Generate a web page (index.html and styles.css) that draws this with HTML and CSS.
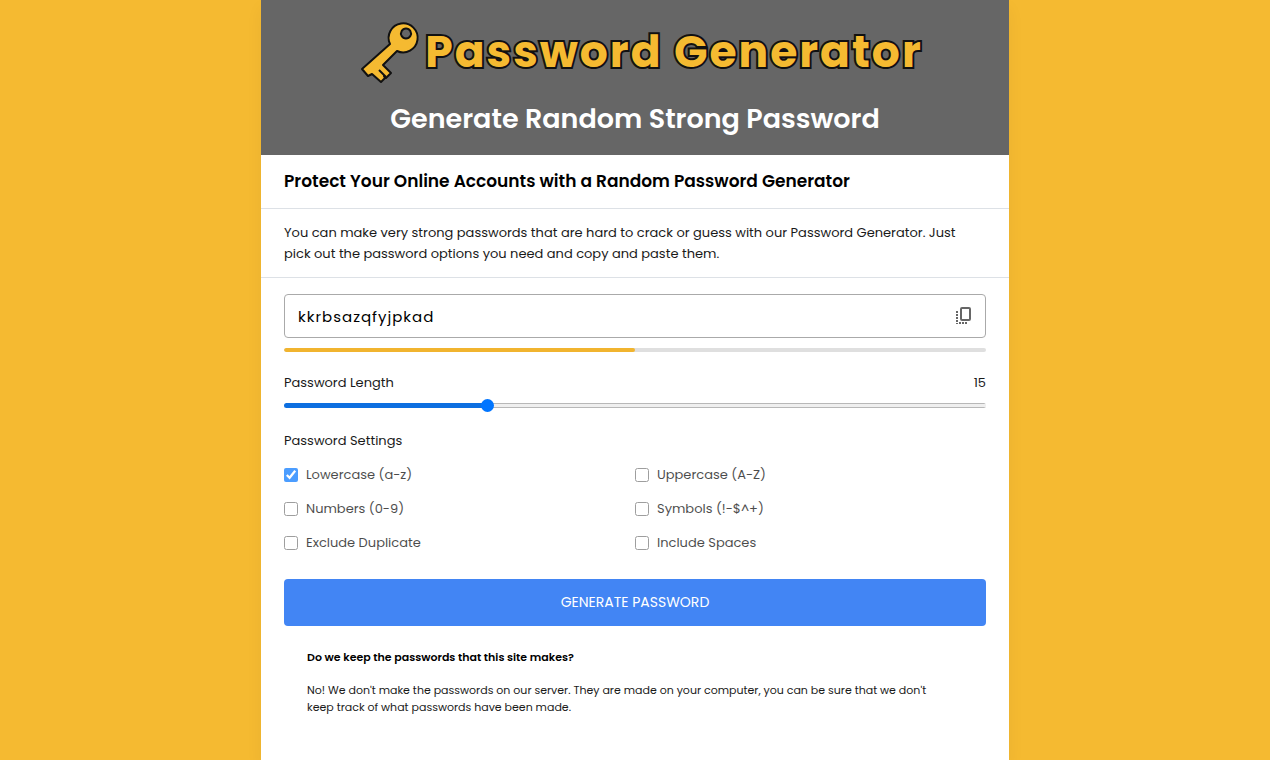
FILE: index.html
```html
<!DOCTYPE html>
<html lang="en">
<head>
<meta charset="utf-8">
<meta name="viewport" content="width=device-width, initial-scale=1">
<title>Password Generator</title>
<link rel="stylesheet" href="styles.css">
</head>
<body>
<main class="card">
  <header class="banner">
    <div class="logo">
      <svg class="logo-key" viewBox="0 0 62 64" aria-hidden="true">
        <path class="key-body" fill-rule="evenodd" d="M31 24A14.500 14.500 0 1 1 38 31L24 45L32 53L27 58L25 56L26 58L22 62L13 54L9 56L3 49ZM47 8.500a5 5 0 1 0 .01 0Z"/>
        <path class="key-cut" d="M20 50L27 57"/>
      </svg>
      <span class="logo-text">Password Generator</span>
    </div>
    <h1 class="title">Generate Random Strong Password</h1>
  </header>
  <h2 class="subtitle">Protect Your Online Accounts with a Random Password Generator</h2>
  <p class="intro">You can make very strong passwords that are hard to crack or guess with our Password Generator. Just pick out the password options you need and copy and paste them.</p>
  <form class="generator">
    <div class="field">
      <input class="field-input" type="text" value="kkrbsazqfyjpkad" aria-label="Generated password" readonly>
      <button class="copy" type="button" aria-label="Copy password">
        <svg viewBox="0 0 16 18" aria-hidden="true">
          <rect x="5" y="1" width="9" height="12" rx="1"/>
          <path class="dots" d="M1 4V17M3 16H12"/>
        </svg>
      </button>
    </div>
    <div class="strength"><div class="strength-fill" style="width:50%"></div></div>
    <div class="row">
      <label for="length">Password Length</label>
      <output for="length">15</output>
    </div>
    <input class="slider" id="length" type="range" min="1" max="50" value="15">
    <fieldset class="settings">
      <legend class="legend">Password Settings</legend>
      <div class="options">
        <label class="option"><input type="checkbox" checked>Lowercase (a-z)</label>
        <label class="option"><input type="checkbox">Uppercase (A-Z)</label>
        <label class="option"><input type="checkbox">Numbers (0-9)</label>
        <label class="option"><input type="checkbox">Symbols (!-$^+)</label>
        <label class="option"><input type="checkbox">Exclude Duplicate</label>
        <label class="option"><input type="checkbox">Include Spaces</label>
      </div>
    </fieldset>
    <button class="generate" type="button">GENERATE PASSWORD</button>
  </form>
  <section class="faq">
    <h3 class="question">Do we keep the passwords that this site makes?</h3>
    <p class="answer">No! We don't make the passwords on our server. They are made on your computer, you can be sure that we don't keep track of what passwords have been made.</p>
  </section>
</main>
</body>
</html>
```
FILE: styles.css
```css
* { box-sizing: border-box; margin: 0; padding: 0; }
body {
  min-height: 100vh;
  background: #f5ba31;
  color: #000;
  font-family: Poppins, Inter, "Open Sans", sans-serif;
  font-size: 13px;
  font-weight: 400;
  line-height: 21px;
}
button, input { font: inherit; }
.card {
  max-width: 748px;
  min-height: 100vh;
  margin: 0 auto;
  background: #fff;
  box-shadow: 0 8px 16px rgba(0, 0, 0, .05);
}
.banner {
  padding: 20px 23px 17px;
  background: #666;
  color: #fff;
  text-align: center;
}
.logo {
  display: flex;
  justify-content: center;
  align-items: center;
  gap: 4px;
  height: 64px;
  padding-left: 12px;
}
.logo-key { flex: none; width: 62px; height: 64px; }
.key-body { fill: #f5ba31; stroke: #111; stroke-width: 2; stroke-linejoin: round; }
.key-cut { stroke: #111; stroke-width: 2; }
.logo-text {
  color: #f5ba31;
  font-size: 44px;
  line-height: 60px;
  font-weight: 700;
  letter-spacing: 2px;
  white-space: nowrap;
  -webkit-text-stroke: 4px #111;
  paint-order: stroke fill;
}
.title { margin-top: 15px; font-size: 27px; line-height: 39px; font-weight: 600; }
.subtitle {
  padding: 13px 23px;
  border-bottom: 1px solid #dde1e6;
  font-size: 17px;
  line-height: 27px;
  font-weight: 600;
}
.intro { padding: 13px 32px 13px 23px; border-bottom: 1px solid #dde1e6; color: #1a1a1a; }
.generator { padding: 16px 23px 0; }
.field {
  display: flex;
  align-items: center;
  height: 44px;
  padding: 0 13px;
  border: 1px solid #aaa;
  border-radius: 4px;
}
.field-input {
  flex: 1;
  min-width: 0;
  border: 0;
  outline: 0;
  background: none;
  font-size: 15px;
  letter-spacing: 1px;
}
.copy { display: flex; width: 16px; height: 18px; border: 0; background: none; cursor: pointer; }
.copy svg { width: 16px; height: 18px; fill: none; stroke: #666; stroke-width: 2; }
.copy .dots { stroke-width: 2; stroke-dasharray: 2 1; }
.strength { height: 4px; margin-top: 10px; border-radius: 4px; background: #dfdfdf; overflow: hidden; }
.strength-fill { height: 100%; border-radius: 4px; background: #f1b42f; }
.row { display: flex; justify-content: space-between; margin-top: 20px; color: #1a1a1a; }
.slider { display: block; width: 100%; height: 13px; margin-top: 6px; appearance: none; background: none; }
.slider::-webkit-slider-runnable-track {
  height: 5px;
  border-radius: 4px;
  background:
    linear-gradient(#0d6fe0, #0d6fe0) 0 0 / 29% 100% no-repeat,
    linear-gradient(#b8b8b8 1px, #efefef 1px 4px, #b8b8b8 4px);
}
.slider::-webkit-slider-thumb {
  appearance: none;
  width: 13px;
  height: 13px;
  margin-top: -4px;
  border-radius: 50%;
  background: #0075ff;
}
.settings { margin-top: 18px; border: 0; }
.legend { color: #1a1a1a; }
.options { display: grid; grid-template-columns: 1fr 1fr; gap: 13px 0; padding-top: 13px; }
.option { display: flex; align-items: center; gap: 8px; opacity: .7; }
.option input { width: 14px; height: 14px; accent-color: #0075ff; }
.generate {
  display: block;
  width: 100%;
  height: 47px;
  margin-top: 26px;
  border: 0;
  border-radius: 4px;
  background: #4285f4;
  color: #fff;
  font-size: 14px;
  cursor: pointer;
}
.faq { padding: 23px 60px 23px 46px; font-size: 11px; line-height: 17px; }
.question { font-size: 11px; font-weight: 600; }
.answer { margin-top: 16px; color: #1a1a1a; }
```
